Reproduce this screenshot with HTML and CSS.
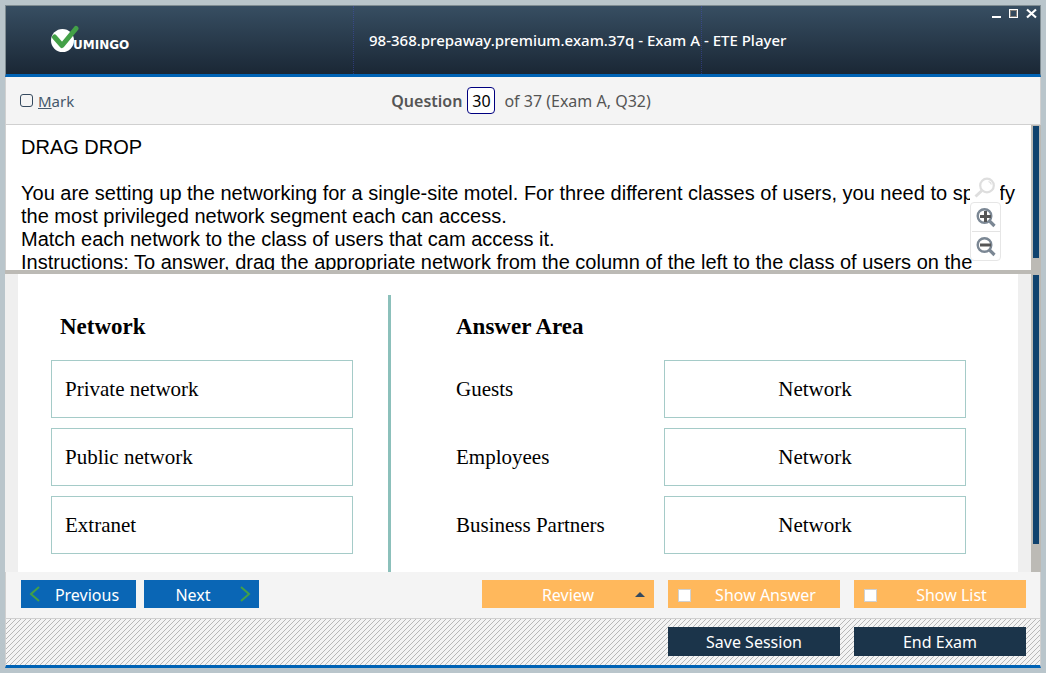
FILE: index.html
```html
<!DOCTYPE html>
<html lang="en">
<head>
<meta charset="utf-8">
<title>98-368.prepaway.premium.exam.37q - Exam A - ETE Player</title>
<link rel="stylesheet" href="styles.css">
</head>
<body>
<div class="window">
  <header class="titlebar">
    <div class="brand">
      <svg class="logo" width="86" height="28" viewBox="0 0 86 28" role="img" aria-label="Vumingo">
        <circle cx="11.500" cy="15.500" r="11.500" fill="#fff"/>
        <path d="M3.500 12 L11 20.500 L25 3.500" fill="none" stroke="#43a047" stroke-width="5" stroke-linecap="round" stroke-linejoin="round"/>
        <text class="logo-text" x="22" y="24">UMINGO</text>
      </svg>
    </div>
    <h1 class="title">98-368.prepaway.premium.exam.37q - Exam A - ETE Player</h1>
    <div class="controls">
      <button class="control" aria-label="Minimize"><svg width="11" height="11" viewBox="0 0 11 11"><path d="M2 8h9v2H2z" fill="#fff"/></svg></button>
      <button class="control" aria-label="Maximize"><svg width="11" height="11" viewBox="0 0 11 11" shape-rendering="crispEdges"><path d="M1.500 1.500h8v8h-8z" fill="none" stroke="#fff"/><path d="M2.500 2.500h6v6h-6z" fill="none" stroke="#85807a"/></svg></button>
      <button class="control" aria-label="Close"><svg width="11" height="11" viewBox="0 0 11 11"><path d="M1 1.500l9 8M10 1.500l-9 8" fill="none" stroke="#fff" stroke-width="2.200"/></svg></button>
    </div>
  </header>

  <div class="questionbar">
    <label class="mark"><input class="mark-box" type="checkbox"><span><u>M</u>ark</span></label>
    <div class="counter">
      <label class="counter-label" for="number">Question</label>
      <input class="counter-input" id="number" type="text" value="30">
      <span>of 37 (Exam A, Q32)</span>
    </div>
  </div>

  <section class="pane passage">
    <div class="passage-text">
      <p>DRAG DROP</p>
      <p>You are setting up the networking for a single-site motel. For three different classes of users, you need to specify<br>the most privileged network segment each can access.<br>Match each network to the class of users that cam access it.<br>Instructions: To answer, drag the appropriate network from the column of the left to the class of users on the</p>
    </div>
    <div class="zoom">
      <button class="zoom-reset" aria-label="Reset zoom"><svg width="30" height="29" viewBox="0 0 30 29" fill="none" stroke="#dedede"><circle cx="17" cy="12.500" r="6.800" stroke-width="2.200"/><path d="M18.500 8.500q2.500.8 2.800 3" stroke-width="1.200"/><path d="M12 17.500L5.500 23.500" stroke-width="3"/></svg></button>
      <div class="zoom-panel">
        <button class="zoom-button" aria-label="Zoom in"><svg width="28" height="28" viewBox="0 0 28 28" fill="none"><circle cx="12.500" cy="13" r="6.800" stroke="#7b8794" stroke-width="2.400"/><path d="M17.500 18l5 5" stroke="#7b8794" stroke-width="3.200"/><path d="M13.500 8v11M8 13.500h11" stroke="#555" stroke-width="3"/></svg></button>
        <button class="zoom-button" aria-label="Zoom out"><svg width="28" height="28" viewBox="0 0 28 28" fill="none"><circle cx="12.500" cy="13" r="6.800" stroke="#7b8794" stroke-width="2.400"/><path d="M17.500 18l5 5" stroke="#7b8794" stroke-width="3.200"/><path d="M8 13h11" stroke="#555" stroke-width="3"/></svg></button>
      </div>
    </div>
    <div class="scrollbar"><div class="thumb thumb-passage"></div></div>
  </section>

  <section class="pane exhibit">
    <div class="board">
      <div class="sources">
        <h2 class="heading">Network</h2>
        <ul class="list">
          <li class="card">Private network</li>
          <li class="card">Public network</li>
          <li class="card">Extranet</li>
        </ul>
      </div>
      <div class="answers">
        <h2 class="heading">Answer Area</h2>
        <ul class="list">
          <li class="answer"><span>Guests</span><div class="card target">Network</div></li>
          <li class="answer"><span>Employees</span><div class="card target">Network</div></li>
          <li class="answer"><span>Business Partners</span><div class="card target">Network</div></li>
        </ul>
      </div>
    </div>
    <div class="scrollbar"><div class="thumb thumb-exhibit"></div></div>
  </section>

  <nav class="toolbar">
    <button class="button nav"><svg width="12" height="18" viewBox="0 0 12 18"><path d="M10 1L2 8l8 7" fill="none" stroke="#43a047" stroke-width="2"/></svg><span class="caption">Previous</span></button>
    <button class="button nav"><span class="caption">Next</span><svg width="12" height="18" viewBox="0 0 12 18"><path d="M2 1l8 7-8 7" fill="none" stroke="#43a047" stroke-width="2"/></svg></button>
    <button class="button option review"><span class="caption">Review</span><svg width="10" height="6" viewBox="0 0 10 6"><path d="M0 5L5 0l5 5z" fill="#34495e"/></svg></button>
    <label class="button option"><input class="option-box" type="checkbox"><span class="caption">Show Answer</span></label>
    <label class="button option"><input class="option-box" type="checkbox"><span class="caption">Show List</span></label>
  </nav>

  <footer class="footer">
    <button class="button session">Save Session</button>
    <button class="button session">End Exam</button>
  </footer>
</div>
</body>
</html>
```
FILE: styles.css
```css
* { box-sizing: border-box; }

body {
  margin: 0;
  background: #b9c5cb;
  font-family: "Noto Sans", "Open Sans", sans-serif;
  font-size: 16px;
}

button, input { font: inherit; }
button { border: 0; padding: 0; background: none; }
svg { display: block; flex: none; }
h1, h2, p, ul { margin: 0; padding: 0; }
ul { list-style: none; }

.window {
  display: flex;
  flex-direction: column;
  height: 100vh;
  border: 5px solid #b9c5cb;
}

.titlebar {
  display: grid;
  grid-template-columns: 347fr 349fr 338fr;
  flex: none;
  height: 72px;
  border: 1px solid #7f8c92;
  border-bottom: 3px solid #0063b5;
  background: linear-gradient(#374e62, #1a2735);
}

.brand { padding: 19px 0 0 45px; }

.logo-text {
  fill: #fff;
  font-family: "DejaVu Sans", sans-serif;
  font-size: 12px;
  font-weight: bold;
}

.title {
  display: flex;
  align-items: center;
  min-width: 0;
  padding-left: 15px;
  border: dotted rgba(70, 80, 210, 0.4);
  border-width: 0 1px;
  color: #fff;
  font-size: 15px;
  font-weight: 500;
  white-space: nowrap;
}

.controls {
  display: flex;
  justify-content: flex-end;
  gap: 7px;
  padding: 2px 3px;
}

.control { height: 11px; }

.questionbar {
  display: grid;
  grid-template-columns: 1fr auto 1fr;
  align-items: center;
  flex: none;
  height: 48px;
  padding: 0 18px 0 14px;
  border: solid #d0d0d0;
  border-width: 0 1px 1px;
  background: #f4f4f4;
  color: #555;
}

.mark {
  display: flex;
  align-items: center;
  gap: 5px;
  color: #44586b;
  font-size: 15px;
}

.mark-box {
  appearance: none;
  width: 13px;
  height: 13px;
  margin: 0;
  border: 1px solid #34495e;
  border-radius: 3px;
}

.counter {
  display: flex;
  align-items: center;
}

.counter-label { font-weight: 600; }

.counter-input {
  width: 28px;
  height: 27px;
  margin: 0 9px 0 5px;
  padding: 0;
  border: 1px solid #000080;
  border-radius: 4px;
  background: #fff;
  color: #000;
  text-align: center;
}

.pane {
  position: relative;
  display: flex;
  min-height: 0;
  overflow: hidden;
}

.passage {
  flex: 1 1 149px;
  border-bottom: 4px solid #bcbab5;
  background: #fff;
}

.passage-text {
  flex: 1;
  padding: 11px 0 0 15px;
  border-left: 1px solid #d0d0d0;
  font-family: "Liberation Sans", Arial, sans-serif;
  font-size: 20px;
  line-height: 23px;
  white-space: nowrap;
  overflow: hidden;
}

.passage-text p + p { margin-top: 23px; }

.zoom {
  position: absolute;
  top: 48px;
  right: 40px;
  width: 31px;
}

.zoom-reset { display: block; background: #fff; }

.zoom-panel {
  padding: 0 1px;
  border: 1px solid #e6e6e6;
  border-radius: 4px;
  background: #fff;
}

.zoom-button { display: block; }
.zoom-button + .zoom-button { border-top: 1px solid #e3e3e3; }

.scrollbar {
  flex: none;
  width: 10px;
  padding: 1px 2px;
  background: #bcbab5;
}

.thumb { background: #0f426e; }
.thumb-passage { height: 92%; }
.thumb-exhibit { height: 91%; }

.exhibit { flex: 2 1 298px; background: #efefef; }

.board {
  display: grid;
  grid-template-columns: 37% 1fr;
  flex: 1;
  margin: 0 13px;
  padding-top: 21px;
  background: #fff;
  font-family: "Liberation Serif", "Times New Roman", serif;
  font-size: 21px;
}

.sources { padding: 0 35px 0 33px; }

.answers {
  padding: 0 52px 0 65px;
  border-left: 3px solid #8cc0bb;
}

.heading {
  height: 65px;
  padding: 20px 0 0 9px;
  font-size: 23px;
  line-height: 24px;
}

.answers .heading { padding-left: 0; }

.list { display: grid; gap: 10px; }

.card {
  display: flex;
  align-items: center;
  height: 58px;
  padding-left: 13px;
  border: 1px solid #a5cbc8;
}

.answer {
  display: grid;
  grid-template-columns: 1fr 302px;
  align-items: center;
}

.target { justify-content: center; padding: 0; }

.toolbar {
  display: flex;
  align-items: center;
  flex: none;
  height: 47px;
  padding: 0 14px 2px 15px;
  border: solid #d0d0d0;
  border-width: 0 1px 1px;
  background: #f4f4f4;
  gap: 14px;
}

.button {
  display: flex;
  align-items: center;
  height: 28px;
  padding-top: 2px;
  color: #fff;
}

.caption { flex: 1; text-align: center; }

.nav {
  gap: 5px;
  width: 115px;
  padding: 2px 8px 0;
  background: #0a66b5;
}

.nav + .nav { margin-left: -6px; }

.option {
  width: 172px;
  padding: 2px 0 0 10px;
  background: #ffb85c;
}

.review {
  margin-left: auto;
  padding: 2px 9px 0 19px;
}

.option-box {
  appearance: none;
  width: 13px;
  height: 13px;
  margin: 0;
  border: 1px solid #d0d0d0;
  background: #fff;
}

.footer {
  display: flex;
  align-items: center;
  justify-content: flex-end;
  flex: none;
  gap: 14px;
  height: 49px;
  padding: 0 14px 2px 0;
  border: solid #d0d0d0;
  border-width: 0 1px;
  border-bottom: 3px solid #0063b5;
  background: #f4f4f4 url("data:image/svg+xml,%3Csvg xmlns='http://www.w3.org/2000/svg' width='5' height='5' shape-rendering='crispEdges'%3E%3Cpath d='M4 0h1v1H4zM3 1h1v1H3zM2 2h1v1H2zM1 3h1v1H1zM0 4h1v1H0z' fill='%23b8b8b8'/%3E%3C/svg%3E");
}

.session {
  justify-content: center;
  width: 172px;
  height: 29px;
  background: #1b344a;
}
```
